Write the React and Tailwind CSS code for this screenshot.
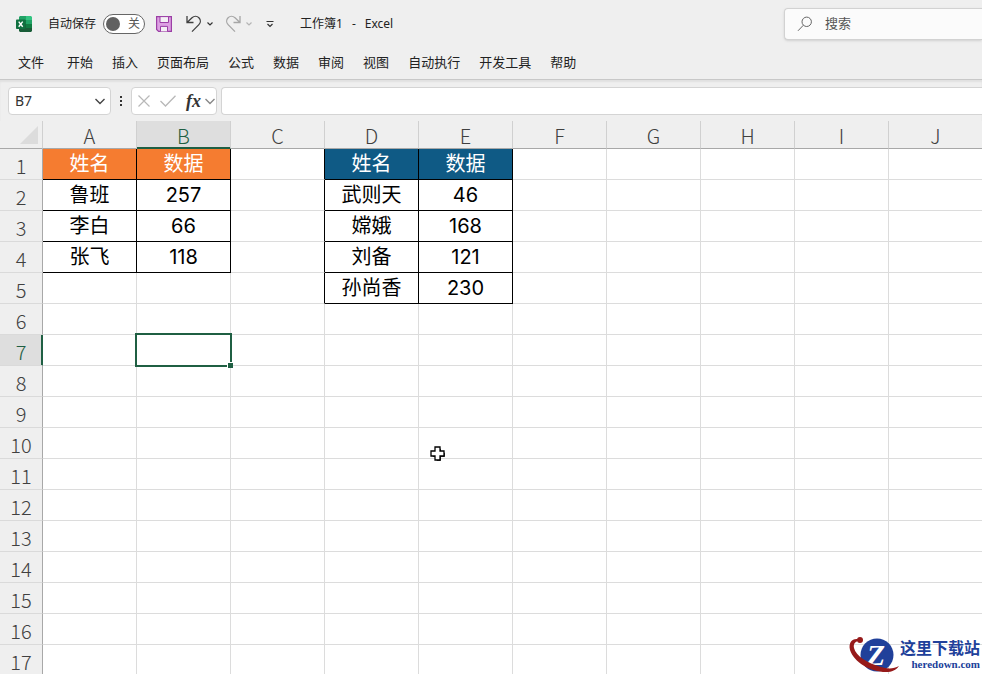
import React, { useState } from "react";

const MENUS = ["文件", "开始", "插入", "页面布局", "公式", "数据", "审阅", "视图", "自动执行", "开发工具", "帮助"];
const COLUMNS = ["A", "B", "C", "D", "E", "F", "G", "H", "I", "J"];
const ROWS = Array.from({ length: 17 }, (_, i) => i + 1);

const CELLS = {
  A1: "姓名", B1: "数据",
  A2: "鲁班", B2: "257",
  A3: "李白", B3: "66",
  A4: "张飞", B4: "118",
  D1: "姓名", E1: "数据",
  D2: "武则天", E2: "46",
  D3: "嫦娥", E3: "168",
  D4: "刘备", E4: "121",
  D5: "孙尚香", E5: "230",
};

const fillOf = (col, row) => {
  if (row !== 1) return "text-black";
  if (col === "A" || col === "B") return "bg-[#f57c30] text-white";
  if (col === "D" || col === "E") return "bg-[#0f5a85] text-white";
  return "";
};

// cells own their right and bottom edges, so column C draws the left edge of table D:E
const borderOf = (col, row) => {
  if (CELLS[col + row]) return "border-black";
  if (col === "C" && row <= 5) return "border-r-black border-b-[#dcdcdc]";
  return "border-[#dcdcdc]";
};

function Chevron({ className }) {
  return (
    <svg viewBox="0 0 12 12" className={className} fill="none" stroke="currentColor" aria-hidden="true">
      <path d="M1.5 4 6 8.5 10.5 4" strokeWidth="1.4" />
    </svg>
  );
}

function SmallChevron() {
  return (
    <svg viewBox="0 0 6 6" className="size-1.5" fill="none" stroke="currentColor" aria-hidden="true">
      <path d="M.5 1.5 3 4l2.5-2.5" strokeWidth="1.2" />
    </svg>
  );
}

function ExcelLogo() {
  return (
    <svg viewBox="0 0 16 16" className="size-4 shrink-0" role="img" aria-label="Excel">
      <path d="M4 0h6v4H3V1z" fill="#21a366" />
      <path d="M10 0h5l1 1v3h-6z" fill="#33c481" />
      <path d="M3 4h7v4H3z" fill="#107c41" />
      <path d="M10 4h6v4h-6z" fill="#21a366" />
      <path d="M3 8h7v4H3z" fill="#185c37" />
      <path d="M10 8h6v4h-6z" fill="#107c41" />
      <path d="M3 12h13v3l-1 1H4l-1-1z" fill="#185c37" />
      <rect x="0" y="3.5" width="9.5" height="9.5" rx="0.8" fill="#107040" />
      <path d="m2.7 5.6 4 5.2M6.7 5.6l-4 5.2" stroke="#fff" strokeWidth="1.4" />
    </svg>
  );
}

function TitleBar() {
  const [autoSave, setAutoSave] = useState(false);

  return (
    <header className="flex h-[47px] shrink-0 items-center pl-4">
      <ExcelLogo />
      <label className="ml-4 flex shrink-0 cursor-pointer items-center gap-[7px] text-xs">
        自动保存
        <input
          type="checkbox"
          className="peer sr-only"
          checked={autoSave}
          onChange={(e) => setAutoSave(e.target.checked)}
        />
        <span className="flex h-5 w-[42px] items-center justify-between rounded-full border border-[#666] bg-white pr-1 pl-0.5 text-[#555] peer-checked:flex-row-reverse">
          <span className="size-3.5 rounded-full bg-[#616161]" />
          <span>{autoSave ? "开" : "关"}</span>
        </span>
      </label>

      <button aria-label="保存" className="ml-[11px] shrink-0">
        <svg viewBox="0 0 16 16" className="size-4" fill="none" stroke="#9b3fa5">
          <path d="M.6.6h14.8v14.8H2.6l-2-2z" fill="#dda0e3" strokeWidth="1.2" />
          <path d="M4 .6h8.5v5.9H4z" fill="#f4f0f5" />
          <path d="M4.5 15.4v-5h7v5" fill="#f4f0f5" />
        </svg>
      </button>
      <button aria-label="撤消" className="ml-3.5 shrink-0 text-[#404040]">
        <svg viewBox="0 0 16 18" className="h-[18px] w-4" fill="none" stroke="currentColor" strokeWidth="1.3">
          <path d="M1 1v6.5h6.5M1.3 7.2 6 2.8c2-1.8 5-1.9 6.9 0s1.9 4.8 0 6.8L6 16.6" />
        </svg>
      </button>
      <button aria-label="撤消选项" className="ml-[5px] shrink-0 text-[#333]"><SmallChevron /></button>
      <button aria-label="恢复" className="ml-3 shrink-0 text-[#a6a6a6]">
        <svg viewBox="0 0 16 18" className="h-[18px] w-4" fill="none" stroke="currentColor" strokeWidth="1.3">
          <path d="M15 1v6.5H8.5M14.7 7.2 10 2.8c-2-1.8-5-1.9-6.9 0s-1.9 4.8 0 6.8L10 16.6" />
        </svg>
      </button>
      <button aria-label="恢复选项" className="ml-[5px] shrink-0 text-[#b5b5b5]"><SmallChevron /></button>
      <button aria-label="自定义快速访问工具栏" className="ml-3.5 shrink-0">
        <svg viewBox="0 0 8 8" className="size-2" fill="none" stroke="#333">
          <path d="M.5 1.5h7M1.5 4 4 6.5 6.5 4" strokeWidth="1.2" />
        </svg>
      </button>

      <h1 className="ml-[26px] flex shrink-0 gap-[9px] text-xs">
        <span>工作簿1</span>
        <span>-</span>
        <span>Excel</span>
      </h1>

      <label className="ml-auto flex h-8 w-[198px] shrink-0 items-center gap-3 rounded-l border border-r-0 border-[#d2d2d2] bg-[#fbfbfb] pl-3 shadow-sm">
        <svg viewBox="0 0 16 16" className="size-4 shrink-0" fill="none" stroke="#666" aria-hidden="true">
          <circle cx="9.7" cy="5.8" r="4.7" />
          <path d="M6.4 9.2 1 14.8" />
        </svg>
        <input
          type="search"
          aria-label="搜索"
          placeholder="搜索"
          className="w-full bg-transparent text-[13px] outline-none placeholder:text-[#555]"
        />
      </label>
    </header>
  );
}

function FormulaBar() {
  return (
    <div className="flex h-[42px] shrink-0 items-center border-t border-[#c8c8c8] bg-[#efefef] pl-2 shadow-[inset_0_2px_2px_rgba(0,0,0,0.06)]">
      <div className="flex h-7 w-[103px] shrink-0 items-center rounded border border-[#d4d4d4] bg-white pr-1 pl-1.5">
        <input aria-label="名称框" defaultValue="B7" className="w-full min-w-0 text-sm text-[#333] outline-none" />
        <button aria-label="名称列表" className="text-[#444]"><Chevron className="size-3" /></button>
      </div>
      <div className="flex w-5 shrink-0 flex-col items-center gap-0.5">
        <span className="size-0.5 bg-[#333]" />
        <span className="size-0.5 bg-[#333]" />
        <span className="size-0.5 bg-[#333]" />
      </div>
      <div className="flex h-7 w-[86px] shrink-0 items-center rounded border border-[#d4d4d4] bg-white pl-1.5">
        <button aria-label="取消" className="text-[#b8b8b8]">
          <svg viewBox="0 0 12 12" className="size-3" fill="none" stroke="currentColor">
            <path d="m.5.5 11 11M11.5.5l-11 11" strokeWidth="1.2" />
          </svg>
        </button>
        <button aria-label="输入" className="ml-2.5 text-[#b8b8b8]">
          <svg viewBox="0 0 16 12" className="h-3 w-4" fill="none" stroke="currentColor">
            <path d="m.5 6 5 5L15.5.8" strokeWidth="1.3" />
          </svg>
        </button>
        <button aria-label="插入函数" className="ml-2.5 w-3.5 font-['Liberation_Serif',serif] text-lg leading-6 font-bold text-[#333] italic">
          fx
        </button>
        <button aria-label="函数列表" className="ml-1 text-[#888]"><Chevron className="size-3" /></button>
      </div>
      <input
        aria-label="编辑栏"
        className="ml-1 h-7 min-w-0 flex-1 rounded-l border border-r-0 border-[#d4d4d4] bg-white px-2 text-sm outline-none"
      />
    </div>
  );
}

function Sheet() {
  return (
    <table className="w-max table-fixed border-separate border-spacing-0 bg-white text-center">
      <colgroup>
        <col className="w-[43px]" />
        {COLUMNS.map((c) => <col key={c} className="w-[94px]" />)}
      </colgroup>
      <thead className="font-['Noto_Sans_CJK_SC',sans-serif]">
        <tr className="h-7 bg-[#efefef] text-xl leading-6 text-[#404040]">
          <th className="border-r border-b border-r-[#d0d0d0] border-b-[#a8a8a8] p-0">
            <button aria-label="全选" className="mr-1 ml-auto block">
              <svg viewBox="0 0 18 18" className="size-[18px]"><path d="M18 0v18H0z" fill="#dcdcdc" /></svg>
            </button>
          </th>
          {COLUMNS.map((c) => (
            <th
              key={c}
              scope="col"
              className={[
                "border-r border-b border-r-[#d0d0d0] p-0 pt-0.5 font-light",
                c === "B"
                  ? "border-b-[#1f5f43] bg-[#dedede] text-[#1f5f43] shadow-[inset_0_-1px_#1f5f43]"
                  : "border-b-[#a8a8a8]",
              ].join(" ")}
            >
              {c}
            </th>
          ))}
        </tr>
      </thead>
      <tbody>
        {ROWS.map((r) => (
          <tr key={r} className="h-[31px]">
            <th
              scope="row"
              className={[
                "border-r border-b border-b-[#dadada] p-0 pt-1 font-['Noto_Sans_CJK_SC',sans-serif] text-xl leading-6 font-light",
                r === 7
                  ? "border-r-[#1f5f43] bg-[#dedede] text-[#1f5f43] shadow-[inset_-1px_0_#1f5f43]"
                  : "border-r-[#a8a8a8] bg-[#efefef] text-[#404040]",
              ].join(" ")}
            >
              {r}
            </th>
            {COLUMNS.map((c) => (
              <td
                key={c}
                className={[
                  "relative border-r border-b p-0 font-['Inter','Noto_Sans_CJK_SC',sans-serif] text-xl leading-6 font-normal",
                  fillOf(c, r),
                  borderOf(c, r),
                ].join(" ")}
              >
                {CELLS[c + r]}
                {c === "B" && r === 7 && (
                  <div className="absolute -inset-0.5 z-10 border-2 border-[#1f5f43]">
                    <span className="absolute -right-[3px] -bottom-[3px] size-1.5 border-t border-l border-white bg-[#1f5f43]" />
                  </div>
                )}
              </td>
            ))}
          </tr>
        ))}
      </tbody>
    </table>
  );
}

function Watermark() {
  return (
    <div className="absolute right-0.5 bottom-0 flex items-center font-['Liberation_Serif','Noto_Sans_CJK_SC',serif] font-bold">
      <svg viewBox="0 0 52 38" className="h-[38px] w-[52px]" aria-hidden="true">
        <circle cx="29" cy="19" r="16.5" fill="#20409a" />
        <text x="28" y="29" textAnchor="middle" fontSize="30" fontStyle="italic" fill="#fff">Z</text>
        <path d="M13 4C5 1 0 6 2 14c4 12 20 22 36 22 6 0 10-2 13-6-5 3-12 3-18 1C19 27 8 20 6 12 5 7 8 5 13 4z" fill="#961a1a" />
        <circle cx="12" cy="4" r="3" fill="#961a1a" />
      </svg>
      <div className="text-right text-[#20409a]">
        <p className="text-base leading-[18px]">这里下载站</p>
        <p className="text-[11px] leading-3">heredown.com</p>
      </div>
    </div>
  );
}

export default function App() {
  return (
    <div className="relative flex h-screen flex-col overflow-hidden bg-[#efefef] font-['Noto_Sans','Noto_Sans_CJK_SC',sans-serif] text-[#222]">
      <TitleBar />
      <nav className="flex h-8 shrink-0 items-center gap-[19px] pl-[18px] text-[13px]">
        {MENUS.map((m) => (
          <button key={m} className="shrink-0 first:mr-1">{m}</button>
        ))}
      </nav>
      <FormulaBar />
      <main className="min-h-0 flex-1 overflow-hidden bg-white">
        <Sheet />
      </main>

      {/* mouse pointer */}
      <svg viewBox="0 0 16 16" className="absolute top-[446px] left-[430px] size-4" aria-hidden="true">
        <path d="M6 2h4v4h4v4h-4v4H6v-4H2V6h4z" transform="translate(.8 .8)" fill="#000" />
        <path d="M5 1h5v4h4v5h-4v4H5v-4H1V5h4z" fill="#fff" stroke="#000" strokeWidth="1.3" />
      </svg>
      <Watermark />
    </div>
  );
}
